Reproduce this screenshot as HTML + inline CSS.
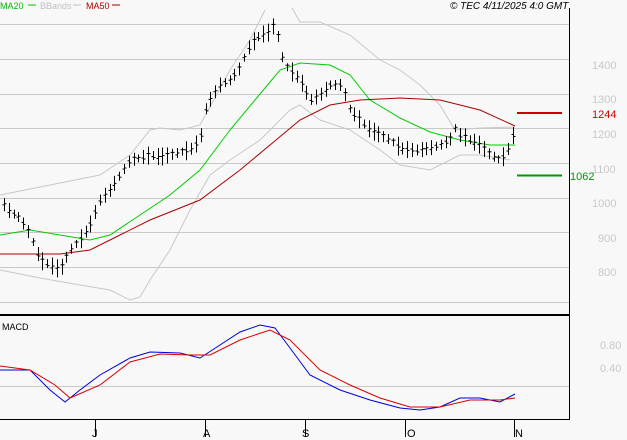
<!DOCTYPE html>
<html><head><style>
body{margin:0;width:627px;height:440px;background:#f8f8f8;overflow:hidden;font-family:"Liberation Sans",sans-serif}
</style></head><body>
<svg id="s" width="627" height="440" xmlns="http://www.w3.org/2000/svg" style="position:absolute;left:0;top:0">
<g stroke="#c8c8c8" stroke-width="1">
<line x1="0" y1="24.5" x2="569" y2="24.5"/><line x1="0" y1="59.5" x2="569" y2="59.5"/><line x1="0" y1="94.5" x2="569" y2="94.5"/><line x1="0" y1="128.5" x2="569" y2="128.5"/><line x1="0" y1="163.5" x2="569" y2="163.5"/><line x1="0" y1="198.5" x2="569" y2="198.5"/><line x1="0" y1="232.5" x2="569" y2="232.5"/><line x1="0" y1="267.5" x2="569" y2="267.5"/><line x1="0" y1="302.5" x2="569" y2="302.5"/><line x1="0" y1="386.5" x2="569" y2="386.5"/>
</g>
<g fill="none" stroke="#c8c8c8" stroke-width="1">
<polyline points="0,195 50,185 100,175 130,155 150,130 160,128 180,130 200,125 230,70 250,40 265,10"/>
<polyline points="292,8 300,22 320,22 350,35 380,60 400,70 420,85 440,105 455,130 480,128 515,127"/>
<polyline points="0,270 40,278 80,285 110,290 130,300 140,297 150,280 170,250 190,210 210,175 230,160 260,140 290,110 300,105 320,120 350,130 380,150 400,165 430,170 460,155 480,155 510,160"/>
</g>
<polyline fill="none" stroke="#00cc00" points="0,235 30,230 60,235 90,240 110,235 140,215 170,195 200,170 230,130 255,100 280,70 300,63 330,65 350,75 370,100 400,118 430,132 460,140 490,145 515,145"/>
<polyline fill="none" stroke="#aa0000" points="0,254 60,254 90,250 120,235 150,220 200,200 240,170 270,145 300,120 330,105 360,100 400,98 440,100 480,110 515,126"/>
<g id="bars" stroke="#000" stroke-width="1"></g>
<line x1="569.5" y1="8" x2="569.5" y2="419" stroke="#000"/>
<line x1="0" y1="315" x2="569" y2="315" stroke="#000" stroke-width="2"/>
<line x1="0" y1="419.5" x2="570" y2="419.5" stroke="#000"/>
<g stroke="#000"><line x1="95.5" y1="419" x2="95.5" y2="437"/><line x1="205.5" y1="419" x2="205.5" y2="437"/><line x1="305.5" y1="419" x2="305.5" y2="437"/><line x1="405.5" y1="419" x2="405.5" y2="437"/><line x1="514.5" y1="419" x2="514.5" y2="437"/></g>
<polyline fill="none" stroke="#0000dd" points="0,370 30,370 50,390 65,402 80,390 100,375 130,358 150,352 180,353 200,358 220,345 240,332 260,325 275,328 290,348 310,375 340,390 370,400 400,408 420,410 440,407 460,398 480,398 500,402 515,394"/>
<polyline fill="none" stroke="#dd0000" points="0,366 30,370 55,385 70,398 100,385 130,362 160,354 190,355 210,355 240,340 270,330 290,340 320,370 350,385 380,398 410,407 440,407 470,400 500,400 515,398"/>
<line x1="517" y1="113" x2="562" y2="113" stroke="#cc0000" stroke-width="2"/>
<line x1="517" y1="175.5" x2="562" y2="175.5" stroke="#009900" stroke-width="2"/>
<g font-size="11" fill="#c8c8c8" font-family="Liberation Sans,sans-serif">
<text x="592" y="69">1400</text><text x="592" y="103">1300</text><text x="592" y="138">1200</text><text x="592" y="173">1100</text><text x="592" y="207">1000</text><text x="598" y="242">900</text><text x="598" y="276">800</text>
<text x="600" y="349">0.80</text><text x="600" y="372">0.40</text>
</g>
<text x="592" y="118" font-size="11" fill="#cc0000">1244</text>
<text x="570" y="180" font-size="11" fill="#009900">1062</text>
<g font-size="11" fill="#000"><text x="92" y="437">J</text><text x="203" y="437">A</text><text x="302" y="437">S</text><text x="407" y="437">O</text><text x="515" y="437">N</text></g>
<text x="2" y="330" font-size="9" fill="#000">MACD</text>
<text x="0" y="9" font-size="9" fill="#00bb00">MA20</text><line x1="28" y1="5" x2="36" y2="5" stroke="#00bb00"/>
<text x="40" y="9" font-size="9" fill="#c0c0c0">BBands</text><line x1="73" y1="5" x2="81" y2="5" stroke="#c0c0c0"/>
<text x="86" y="9" font-size="9" fill="#aa0000">MA50</text><line x1="112" y1="5" x2="120" y2="5" stroke="#aa0000"/>
<text x="450" y="9" font-size="10" font-style="italic" fill="#000">© TEC 4/11/2025 4:0 GMT</text>
</svg>
<script>
var p=[[0,200],[10,212],[20,218],[30,235],[40,260],[50,265],[60,270],[70,250],[80,240],[90,225],[100,200],[110,190],[120,175],[130,160],[140,158],[150,155],[160,157],[170,155],[180,152],[190,150],[200,140],[205,110],[210,100],[215,92],[220,85],[230,80],[240,68],[245,55],[250,45],[255,40],[260,35],[270,32],[275,22],[280,50],[285,65],[290,70],[300,80],[305,90],[310,100],[320,95],[330,85],[340,85],[345,95],[350,110],[360,120],[370,130],[380,135],[390,140],[400,148],[410,150],[420,150],[430,148],[440,145],[450,140],[455,128],[460,135],[470,140],[480,145],[490,155],[500,160],[505,155],[510,145],[515,128]];
function f(x){for(var i=1;i<p.length;i++)if(x<=p[i][0]){var a=p[i-1],b=p[i];return a[1]+(b[1]-a[1])*(x-a[0])/(b[0]-a[0]);}return p[p.length-1][1];}
var g=document.getElementById('bars'),h='',s=7;
for(var x=4;x<=515;x+=4.8){var xx=Math.round(x)+.5,y=f(x),r=8+((s=(s*37+11)%23))%12;var o=y+((s%5)-2),c=y+(((s*3)%5)-2);
h+='<line x1="'+xx+'" y1="'+(y-r/2)+'" x2="'+xx+'" y2="'+(y+r/2)+'"/><line x1="'+(xx-2)+'" y1="'+o+'" x2="'+xx+'" y2="'+o+'"/><line x1="'+xx+'" y1="'+c+'" x2="'+(xx+2)+'" y2="'+c+'"/>';}
g.innerHTML=h;
</script>
</body></html>
